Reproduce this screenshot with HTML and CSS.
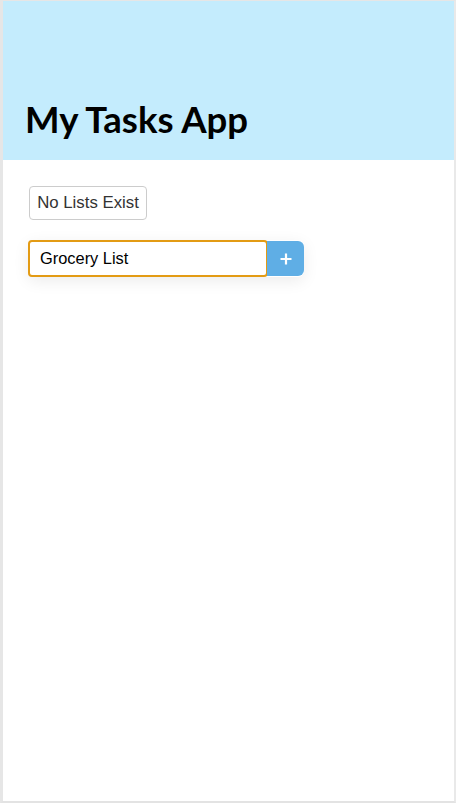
FILE: index.html
```html
<!DOCTYPE html>
<html>
<head>
<meta charset="utf-8">
<link rel="stylesheet" href="styles.css">
</head>
<body>
<div class="frame">
  <header class="app-header">
    <h1 class="app-title">My Tasks App</h1>
  </header>
  <main class="content">
    <button class="empty-btn" type="button">No Lists Exist</button>
    <form class="add-form" onsubmit="return false">
      <input class="list-input" type="text" value="Grocery List" autofocus>
      <button class="add-btn" type="button" aria-label="Add">
        <svg width="12" height="12" viewBox="0 0 12 12"><path d="M6 0.5v11M0.5 6h11" stroke="#fff" stroke-width="2.2" fill="none"/></svg>
      </button>
    </form>
  </main>
</div>
</body>
</html>
```
FILE: styles.css
```css
html, body {
  margin: 0;
  padding: 0;
  background: #fff;
}
.frame {
  box-sizing: border-box;
  width: 456px;
  height: 803px;
  border-left: 3px solid #e6e6e6;
  border-top: 1px solid #e6e6e6;
  border-right: 2px solid #e9e9e9;
  border-bottom: 2px solid #e3e3e3;
  display: flex;
  flex-direction: column;
}
.app-header {
  background: #c4ecfd;
  height: 159px;
  box-sizing: border-box;
  padding: 0 0 0 22px;
  display: flex;
  align-items: flex-end;
}
.app-title {
  margin: 0 0 19px 0;
  font-family: Lato, "Open Sans", sans-serif;
  font-weight: 700;
  font-size: 36.6px;
  line-height: 44px;
  color: #000;
}
.content {
  padding: 26px 0 0 25px;
  display: flex;
  flex-direction: column;
  align-items: flex-start;
  gap: 20px;
}
.empty-btn {
  box-sizing: border-box;
  height: 34px;
  width: 118px;
  margin-left: 1px;
  padding: 0;
  background: #fff;
  border: 1px solid #ccc;
  border-radius: 4px;
  color: #333;
  font-family: "Liberation Sans", Arial, sans-serif;
  font-size: 16.8px;
}
.add-form {
  display: flex;
  align-items: center;
  box-shadow: 0 4px 16px rgba(0, 0, 0, 0.08);
  border-radius: 6px;
}
.list-input {
  box-sizing: border-box;
  width: 240px;
  height: 37px;
  border: 2px solid #e39b14;
  border-radius: 4px;
  padding: 0 10px;
  font-family: "Liberation Sans", Arial, sans-serif;
  font-size: 16.4px;
  color: #000;
  outline: none;
  caret-color: #000;
}
.add-btn {
  box-sizing: border-box;
  width: 37px;
  height: 35px;
  margin-left: -1px;
  border: none;
  background: #5faee5;
  border-radius: 0 6px 6px 0;
  display: flex;
  align-items: center;
  justify-content: center;
  padding: 0;
}
```
